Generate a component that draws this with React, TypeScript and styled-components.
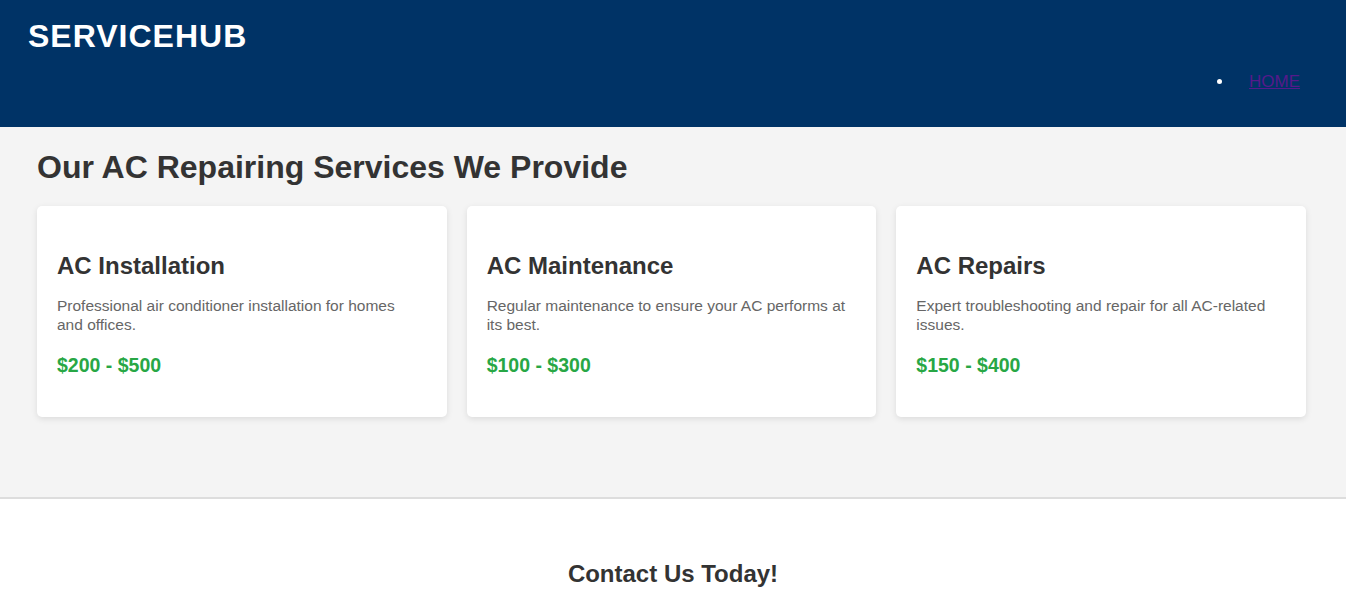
import React from "react";
import styled, { createGlobalStyle } from "styled-components";

const Global = createGlobalStyle`
  html, body { margin: 0; padding: 0; }
  body {
    font-family: "Liberation Sans", Arial, sans-serif;
    background: #f4f4f4;
    color: #333;
  }
`;

const Header = styled.header`
  background: #003366;
  color: #fff;
  padding: 18px 31px 19px 28px;
`;

const Logo = styled.h1`
  margin: 0;
  font-size: 32px;
  font-weight: bold;
  letter-spacing: 1px;
  line-height: normal;
`;

const NavList = styled.ul`
  display: flex;
  justify-content: flex-end;
  margin: 17px 0 16px;
  padding: 0;
  list-style: disc;
`;

const NavItem = styled.li`
  padding: 0 15px;
  font-size: 17px;
  color: #fff;
`;

const NavLink = styled.a`
  color: #551a8b;
  text-decoration: underline;
`;

const Services = styled.section`
  background: #f4f4f4;
  padding: 22px 40px 80px 37px;
  border-bottom: 2px solid #ddd;
`;

const SectionTitle = styled.h2`
  margin: 0 0 20px;
  font-size: 32px;
  font-weight: bold;
  color: #333;
  line-height: normal;
`;

const Grid = styled.div`
  display: grid;
  grid-template-columns: repeat(3, 1fr);
  gap: 20px;
`;

const Card = styled.div`
  background: #fff;
  border-radius: 5px;
  box-shadow: 0 2px 6px rgba(0, 0, 0, 0.1);
  padding: 20px;
`;

const CardTitle = styled.h3`
  margin: 26px 0 16px;
  font-size: 24px;
  font-weight: bold;
  color: #333;
`;

const CardText = styled.p`
  margin: 0;
  max-width: 360px;
  font-size: 15.5px;
  color: #666;
  line-height: 19px;
`;

const Price = styled.p`
  margin: 20px 0 21px;
  font-size: 19.5px;
  line-height: 22px;
  font-weight: bold;
  color: #28a745;
`;

const Footer = styled.footer`
  background: #fff;
  padding: 41px 40px 40px;
  text-align: center;
`;

const FooterTitle = styled.h2`
  margin: 20px 0;
  font-size: 24px;
  font-weight: bold;
  color: #333;
`;

const services = [
  {
    title: "AC Installation",
    text: "Professional air conditioner installation for homes and offices.",
    price: "$200 - $500",
  },
  {
    title: "AC Maintenance",
    text: "Regular maintenance to ensure your AC performs at its best.",
    price: "$100 - $300",
  },
  {
    title: "AC Repairs",
    text: "Expert troubleshooting and repair for all AC-related issues.",
    price: "$150 - $400",
  },
];

export default function App() {
  return (
    <>
      <Global />
      <Header>
        <Logo>SERVICEHUB</Logo>
        <nav>
          <NavList>
            <NavItem>
              <NavLink href="#">HOME</NavLink>
            </NavItem>
          </NavList>
        </nav>
      </Header>
      <Services>
        <SectionTitle>Our AC Repairing Services We Provide</SectionTitle>
        <Grid>
          {services.map((s) => (
            <Card key={s.title}>
              <CardTitle>{s.title}</CardTitle>
              <CardText>{s.text}</CardText>
              <Price>{s.price}</Price>
            </Card>
          ))}
        </Grid>
      </Services>
      <Footer>
        <FooterTitle>Contact Us Today!</FooterTitle>
      </Footer>
    </>
  );
}
